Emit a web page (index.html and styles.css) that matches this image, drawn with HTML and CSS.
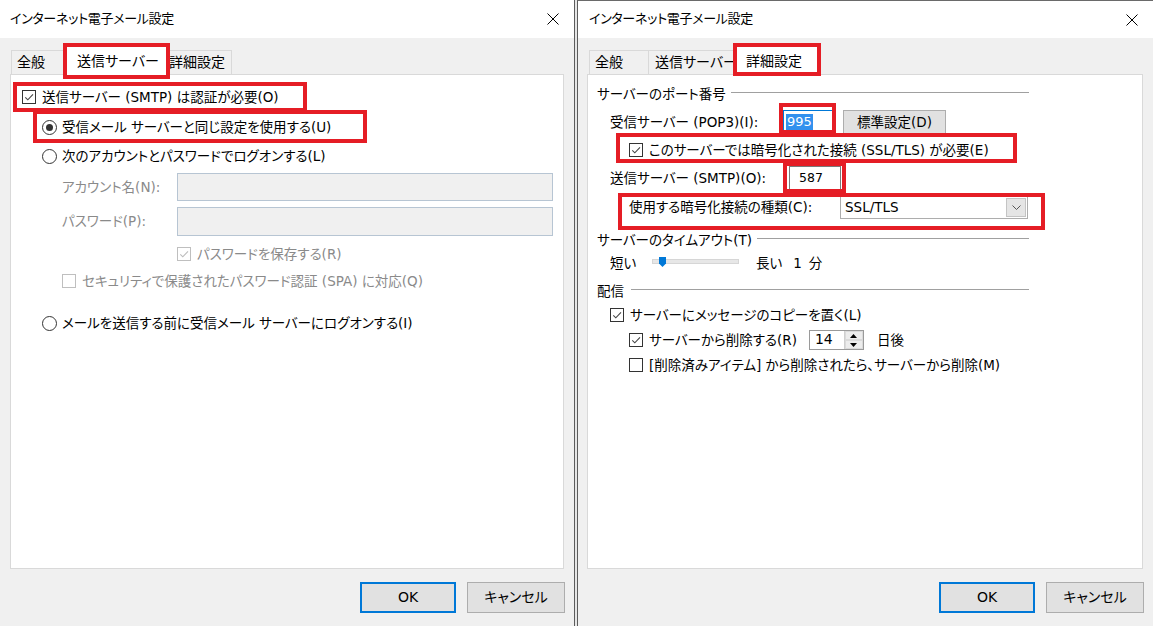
FILE: index.html
```html
<!DOCTYPE html>
<html lang="ja">
<head>
<meta charset="utf-8">
<title>インターネット電子メール設定</title>
<link rel="stylesheet" href="styles.css">
</head>
<body>
<div class="screen">
  <!-- LEFT DIALOG -->
  <div class="dialog dlg-left">
    <div class="titlebar">
      <span class="title">インターネット電子メール設定</span>
      <svg class="close" width="12" height="12" viewBox="0 0 12 12"><path d="M0.5 0.5 L11.5 11.5 M11.5 0.5 L0.5 11.5" stroke="#000" stroke-width="1" fill="none"/></svg>
    </div>
    <div class="tabs">
      <div class="tab tl1">全般</div>
      <div class="tab sel tl2">送信サーバー</div>
      <div class="tab tl3">詳細設定</div>
    </div>
    <div class="panel">
      <div class="stack stack-left">
        <div class="row la1"><span class="cb"><svg width="12" height="12" viewBox="0 0 12 12"><path d="M2.3 6.3 L4.8 8.8 L10 3.3" stroke="#444" stroke-width="1.1" fill="none"/></svg></span>送信サーバー (SMTP) は認証が必要(O)</div>
        <div class="row la2"><span class="rb on"></span>受信メール サーバーと同じ設定を使用する(U)</div>
        <div class="row la3"><span class="rb"></span>次のアカウントとパスワードでログオンする(L)</div>
        <div class="row la4 dim"><span class="lbl-l">アカウント名(N):</span><span class="tb tb-a"></span></div>
        <div class="row la5 dim"><span class="lbl-l">パスワード(P):</span><span class="tb tb-p"></span></div>
        <div class="row la6 dim"><span class="cb dis"><svg width="12" height="12" viewBox="0 0 12 12"><path d="M2.3 6.3 L4.8 8.8 L10 3.3" stroke="#bdbdbd" stroke-width="1.1" fill="none"/></svg></span>パスワードを保存する(R)</div>
        <div class="row la7 dim"><span class="cb dis"></span>セキュリティで保護されたパスワード認証 (SPA) に対応(Q)</div>
        <div class="row la8"><span class="rb"></span>メールを送信する前に受信メール サーバーにログオンする(I)</div>
      </div>
    </div>
    <div class="buttons">
      <div class="btn btn-ok">OK</div>
      <div class="btn btn-cancel">キャンセル</div>
    </div>
    <div class="mark mk-l-tab"></div>
    <div class="mark mk-l-1"></div>
    <div class="mark mk-l-2"></div>
  </div>

  <!-- RIGHT DIALOG -->
  <div class="dialog dlg-right">
    <div class="titlebar">
      <span class="title">インターネット電子メール設定</span>
      <svg class="close" width="12" height="12" viewBox="0 0 12 12"><path d="M0.5 0.5 L11.5 11.5 M11.5 0.5 L0.5 11.5" stroke="#000" stroke-width="1" fill="none"/></svg>
    </div>
    <div class="tabs">
      <div class="tab tr1">全般</div>
      <div class="tab tr2">送信サーバー</div>
      <div class="tab sel tr3">詳細設定</div>
    </div>
    <div class="panel">
      <div class="stack stack-right">
        <div class="hdr ra1">サーバーのポート番号</div>
        <div class="row ra2">
          <span class="lbl-pop">受信サーバー (POP3)(I):</span>
          <span class="field f-pop"><span class="selected">995</span></span>
          <span class="btn btn-std">標準設定(D)</span>
        </div>
        <div class="row ra3"><span class="cb"><svg width="12" height="12" viewBox="0 0 12 12"><path d="M2.3 6.3 L4.8 8.8 L10 3.3" stroke="#444" stroke-width="1.1" fill="none"/></svg></span>このサーバーでは暗号化された接続 (SSL/TLS) が必要(E)</div>
        <div class="row ra4">
          <span class="lbl-smtp">送信サーバー (SMTP)(O):</span>
          <span class="field f-smtp">587</span>
        </div>
        <div class="row ra5">
          <span class="lbl-enc">使用する暗号化接続の種類(C):</span>
          <span class="combo"><span class="combo-text">SSL/TLS</span><span class="combo-btn"><svg width="9" height="5" viewBox="0 0 9 5"><path d="M0.5 0.5 L4.5 4.5 L8.5 0.5" stroke="#555" stroke-width="1" fill="none"/></svg></span></span>
        </div>
        <div class="hdr hdr-t ra6">サーバーのタイムアウト(T)</div>
        <div class="row ra7">
          <span class="lbl-short">短い</span>
          <span class="track"><svg class="thumb" width="7" height="10" viewBox="0 0 7 10"><path d="M0 0 H7 V6.5 L3.5 10 L0 6.5 Z" fill="#0078d7"/></svg></span>
          <span class="lbl-long">長い</span><span class="num1">1</span><span class="min">分</span>
        </div>
        <div class="hdr hdr-d ra8">配信</div>
        <div class="row ra9"><span class="cb"><svg width="12" height="12" viewBox="0 0 12 12"><path d="M2.3 6.3 L4.8 8.8 L10 3.3" stroke="#444" stroke-width="1.1" fill="none"/></svg></span>サーバーにメッセージのコピーを置く(L)</div>
        <div class="row ra10">
          <span class="cb"><svg width="12" height="12" viewBox="0 0 12 12"><path d="M2.3 6.3 L4.8 8.8 L10 3.3" stroke="#444" stroke-width="1.1" fill="none"/></svg></span><span>サーバーから削除する(R)</span>
          <span class="spin"><span class="spin-text">14</span><span class="spin-btns"><span class="spin-b"><svg width="7" height="4" viewBox="0 0 7 4"><path d="M0 4 L3.5 0 L7 4 Z" fill="#000"/></svg></span><span class="spin-b"><svg width="7" height="4" viewBox="0 0 7 4"><path d="M0 0 L3.5 4 L7 0 Z" fill="#000"/></svg></span></span></span>
          <span class="days">日後</span>
        </div>
        <div class="row ra11"><span class="cb"></span>[削除済みアイテム] から削除されたら、サーバーから削除(M)</div>
      </div>
    </div>
    <div class="buttons">
      <div class="btn btn-ok">OK</div>
      <div class="btn btn-cancel">キャンセル</div>
    </div>
    <div class="mark mk-r-tab"></div>
    <div class="mark mk-r-995"></div>
    <div class="mark mk-r-ssl"></div>
    <div class="mark mk-r-587"></div>
    <div class="mark mk-r-enc"></div>
  </div>
</div>
</body>
</html>
```
FILE: styles.css
```css
* { box-sizing: border-box; }
html, body { margin: 0; padding: 0; }
body {
  width: 1153px;
  height: 626px;
  overflow: hidden;
  background: #e6e6e6;
  font-family: "DejaVu Sans", "Noto Sans CJK JP", sans-serif;
  font-feature-settings: "palt" 1;
  font-size: 13.5px;
  line-height: 1.25;
  color: #000;
}
.screen { display: flex; gap: 2px; width: 1153px; height: 626px; }

.dialog {
  position: relative;
  background: #f0f0f0;
  display: flex;
  flex-direction: column;
  height: 626px;
}
.dlg-left { width: 575px; border-right: 1px solid #5c5c5c; }
.dlg-right { width: 576px; border-left: 1px solid #5c5c5c; border-top: 1px solid #6a6a6a; }

.titlebar {
  height: 38px;
  background: #fff;
  display: flex;
  align-items: center;
  justify-content: space-between;
  padding: 0 15px 0 10px;
  flex: none;
}
.dlg-right .titlebar { height: 37px; padding-left: 11px; }
.title { font-size: 13px; letter-spacing: -0.3px; }
.close { display: block; }

.tabs {
  display: flex;
  align-items: flex-end;
  height: 28px;
  margin: 8px 10px 0 10px;
  padding-left: 1px;
  flex: none;
}
.dlg-right .tabs { margin-left: 9px; padding-left: 2px; }
.tab {
  height: 24px;
  border: 1px solid #d9d9d9;
  border-bottom: none;
  background: #f0f0f0;
  display: flex;
  align-items: center;
  white-space: nowrap;
  overflow: hidden;
  flex: none;
  margin-right: -1px;
  font-size: 14px;
}
.tab.sel {
  height: 29px;
  background: #fff;
  margin: 0 -2px -1px -2px;
  position: relative;
  z-index: 2;
  padding-top: 1px;
}
.tl1 { width: 55px; padding-left: 5px; }
.tl2 { width: 104px; padding-left: 13px; }
.tl3 { width: 67px; padding-left: 3px; }
.tr1 { width: 60px; padding-left: 5px; }
.tr2 { width: 91px; padding-left: 6px; }
.tr3 { width: 82px; padding-left: 9px; }

.panel {
  margin: 0 10px;
  height: 495px;
  background: #fff;
  border: 1px solid #d9d9d9;
  position: relative;
  z-index: 1;
  flex: none;
}
.dlg-right .panel { margin-left: 9px; }

.buttons {
  display: flex;
  justify-content: flex-end;
  gap: 11px;
  margin-top: 13px;
  padding-right: 9px;
}
.btn {
  height: 31px;
  background: #e1e1e1;
  border: 1px solid #adadad;
  display: flex;
  align-items: center;
  justify-content: center;
  font-size: 14px;
}
.btn-ok { width: 96px; border: 2px solid #0078d7; }
.btn-cancel { width: 98px; }

/* rows */
.stack { display: flex; flex-direction: column; }
.row { display: flex; align-items: center; height: 20px; white-space: nowrap; flex: none; }
.dim { color: #8a8a8a; }

.stack-left { padding-top: 12px; }
.la1 { padding-left: 11px; }
.la2 { padding-left: 31px; margin-top: 10px; }
.la3 { padding-left: 31px; margin-top: 9px; }
.la4 { padding-left: 51px; margin-top: 7px; height: 28px; }
.la5 { padding-left: 51px; margin-top: 6px; height: 29px; }
.la6 { padding-left: 166px; margin-top: 8px; }
.la7 { padding-left: 51px; margin-top: 7px; }
.la8 { padding-left: 31px; margin-top: 22px; }

.lbl-l { width: 115px; flex: none; }
.tb { display: block; width: 376px; background: #f0f0f0; border: 1px solid #b7c5d3; flex: none; }
.tb-a { height: 28px; }
.tb-p { height: 29px; }

.cb {
  width: 14px;
  height: 14px;
  border: 1px solid #333;
  background: #fff;
  flex: none;
  margin-right: 6px;
  display: inline-flex;
  align-items: center;
  justify-content: center;
}
.cb svg { display: block; }
.cb.dis { border-color: #bfbfbf; }
.rb {
  width: 15px;
  height: 15px;
  border: 1px solid #333;
  border-radius: 50%;
  background: #fff;
  margin-right: 5px;
  flex: none;
  display: inline-flex;
  align-items: center;
  justify-content: center;
}
.rb.on::after {
  content: "";
  width: 7px;
  height: 7px;
  border-radius: 50%;
  background: #333;
}

/* right panel */
.stack-right { padding-top: 9px; }
.hdr {
  display: flex;
  align-items: center;
  height: 20px;
  margin-left: 9px;
  margin-right: 113px;
  white-space: nowrap;
  flex: none;
}
.hdr::after {
  content: "";
  flex: 1;
  height: 1px;
  background: #a0a0a0;
  margin-left: 5px;
  margin-top: -3px;
}
.hdr-d::after { margin-left: 7px; }

.ra2 { padding-left: 22px; margin-top: 6px; height: 25px; }
.ra3 { padding-left: 41px; margin-top: 5px; }
.ra4 { padding-left: 22px; margin-top: 6px; height: 24px; }
.ra5 { padding-left: 41px; margin-top: 6px; height: 23px; }
.ra6 { margin-top: 11px; }
.ra7 { padding-left: 22px; margin-top: 3px; }
.ra8 { margin-top: 8px; }
.ra9 { padding-left: 22px; margin-top: 4px; }
.ra10 { padding-left: 41px; margin-top: 5px; }
.ra11 { padding-left: 41px; margin-top: 5px; }

.lbl-pop { width: 173px; flex: none; }
.lbl-smtp { width: 179px; flex: none; }
.lbl-enc { width: 211px; flex: none; }

.field {
  display: flex;
  align-items: center;
  background: #fff;
  flex: none;
  font-size: 13px;
}
.f-pop { width: 50px; height: 23px; border: 1px solid #0078d7; padding-left: 2px; align-self: flex-start; }
.selected { background: #3391ee; color: #fff; line-height: 16px; padding: 0 1px; }
.f-smtp { width: 52px; height: 24px; border: 1px solid #7a7a7a; padding-left: 9px; font-size: 12.5px; }
.btn-std { width: 103px; height: 25px; margin-left: 10px; font-size: 13.5px; }

.combo {
  width: 188px;
  height: 23px;
  border: 1px solid #adadad;
  background: #fff;
  display: flex;
  align-items: center;
  justify-content: space-between;
  flex: none;
  padding: 1px;
}
.combo-text { padding-left: 3px; }
.combo-btn {
  width: 20px;
  height: 19px;
  background: #e5e5e5;
  border: 1px solid #c4c4c4;
  display: flex;
  align-items: center;
  justify-content: center;
}

.lbl-short { width: 42px; flex: none; }
.track {
  position: relative;
  width: 87px;
  height: 5px;
  background: #e7e7e7;
  border: 1px solid #d6d6d6;
  flex: none;
  margin-top: -4px;
}
.thumb { position: absolute; left: 6px; top: -3px; display: block; }
.lbl-long { margin-left: 17px; }
.num1 { margin-left: 11px; }
.min { margin-left: 7px; }

.spin {
  display: flex;
  width: 55px;
  height: 20px;
  border: 1px solid #9a9a9a;
  margin-left: 12px;
  background: #fff;
  flex: none;
}
.spin-text { flex: 1; padding-left: 5px; display: flex; align-items: center; font-size: 14px; }
.spin-btns { width: 19px; display: flex; flex-direction: column; border-left: 1px solid #cfcfcf; }
.spin-b {
  flex: 1;
  display: flex;
  align-items: center;
  justify-content: center;
  background: #ececec;
  border: 1px solid #dadada;
}
.spin-b svg { display: block; }
.days { margin-left: 13px; }

/* red annotation boxes */
.mark { position: absolute; border: 4px solid #e51d25; z-index: 5; }
.mk-l-tab { left: 63px; top: 43px; width: 107px; height: 36px; }
.mk-l-1 { left: 13px; top: 82px; width: 294px; height: 30px; }
.mk-l-2 { left: 33px; top: 110px; width: 334px; height: 33px; }
.mk-r-tab { left: 155px; top: 42px; width: 88px; height: 33px; }
.mk-r-995 { left: 201px; top: 102px; width: 57px; height: 31px; }
.mk-r-ssl { left: 38px; top: 132px; width: 401px; height: 30px; }
.mk-r-587 { left: 205px; top: 161px; width: 63px; height: 31px; }
.mk-r-enc { left: 40px; top: 192px; width: 427px; height: 37px; }
```
